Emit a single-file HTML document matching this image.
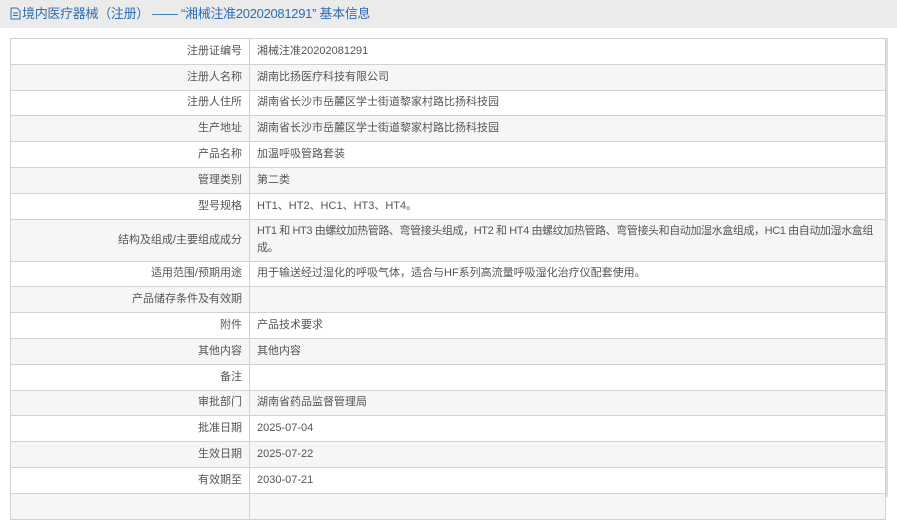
<!DOCTYPE html>
<html><head><meta charset="utf-8"><style>
body{margin:0;background:#fff;width:897px;height:497px;overflow:hidden;font-family:"Liberation Sans","Noto Sans CJK SC",sans-serif;}
.hd{height:28px;background:#ebebeb;color:#2d6db5;font-size:13px;line-height:28px;padding-left:10px;white-space:nowrap;letter-spacing:-0.3px}
.hd svg{vertical-align:-2px;margin-right:1px}
table{position:absolute;left:10px;top:38px;width:876px;border-collapse:collapse;font-size:11px;color:#555;table-layout:fixed}
td{border:1px solid #d2d2d2;padding:0 7px;height:24.8px;line-height:17px}
td.l{width:224px;text-align:right}
tr:nth-child(even) td{background:#f6f6f6}
.sb{position:absolute;left:886px;top:38px;width:2px;height:459px;background:#ddd}
</style></head><body>
<div class="hd"><svg width="11" height="13" viewBox="0 0 11 13"><path d="M1 1h6l3 3v8H1z" fill="none" stroke="#2d6db5"/><path d="M3 6h5M3 8.5h5" stroke="#2d6db5"/></svg>境内医疗器械（注册） —— “湘械注准20202081291” 基本信息</div>
<table>
<tr><td class="l">注册证编号</td><td>湘械注准20202081291</td></tr>
<tr><td class="l">注册人名称</td><td>湖南比扬医疗科技有限公司</td></tr>
<tr><td class="l">注册人住所</td><td>湖南省长沙市岳麓区学士街道黎家村路比扬科技园</td></tr>
<tr><td class="l">生产地址</td><td>湖南省长沙市岳麓区学士街道黎家村路比扬科技园</td></tr>
<tr><td class="l">产品名称</td><td>加温呼吸管路套装</td></tr>
<tr><td class="l">管理类别</td><td>第二类</td></tr>
<tr><td class="l">型号规格</td><td>HT1、HT2、HC1、HT3、HT4。</td></tr>
<tr><td class="l" style="height:41px">结构及组成/主要组成成分</td><td style="letter-spacing:-0.4px">HT1 和 HT3 由螺纹加热管路、弯管接头组成，HT2 和 HT4 由螺纹加热管路、弯管接头和自动加湿水盒组成，HC1 由自动加湿水盒组成。</td></tr>
<tr><td class="l">适用范围/预期用途</td><td>用于输送经过湿化的呼吸气体，适合与HF系列高流量呼吸湿化治疗仪配套使用。</td></tr>
<tr><td class="l">产品储存条件及有效期</td><td></td></tr>
<tr><td class="l">附件</td><td>产品技术要求</td></tr>
<tr><td class="l">其他内容</td><td>其他内容</td></tr>
<tr><td class="l">备注</td><td></td></tr>
<tr><td class="l">审批部门</td><td>湖南省药品监督管理局</td></tr>
<tr><td class="l">批准日期</td><td>2025-07-04</td></tr>
<tr><td class="l">生效日期</td><td>2025-07-22</td></tr>
<tr><td class="l">有效期至</td><td>2030-07-21</td></tr>
<tr><td class="l"></td><td></td></tr>
</table>
<div class="sb"></div>
</body></html>
